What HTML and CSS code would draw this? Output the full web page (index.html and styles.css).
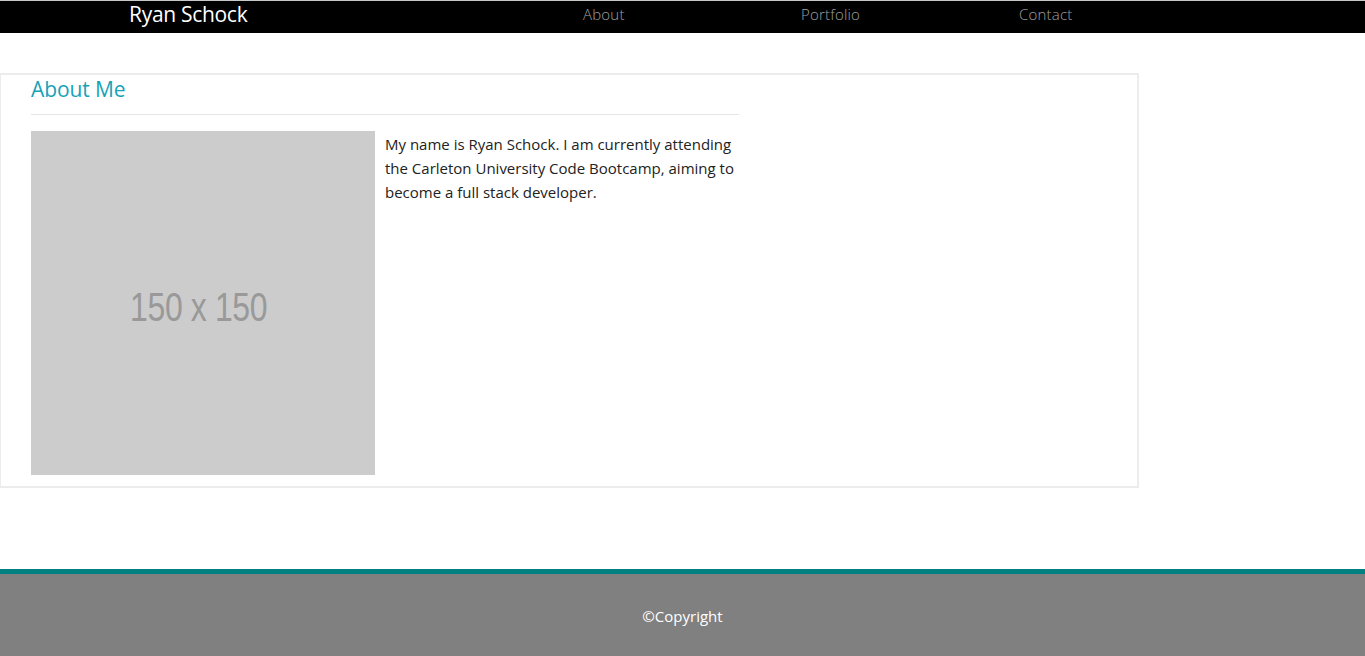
FILE: index.html
```html
<!DOCTYPE html>
<html lang="en">
<head>
<meta charset="utf-8">
<title>Ryan Schock</title>
<link rel="stylesheet" href="styles.css">
</head>
<body>
<header class="topbar">
  <div class="brand">Ryan Schock</div>
  <nav class="nav">
    <a href="#" class="nav-link nav-about">About</a>
    <a href="#" class="nav-link nav-portfolio">Portfolio</a>
    <a href="#" class="nav-link nav-contact">Contact</a>
  </nav>
</header>
<main class="main">
  <section class="about">
    <h1 class="about-title">About Me</h1>
    <hr class="about-rule">
    <div class="about-body">
      <div class="placeholder"><span>150 x 150</span></div>
      <p class="about-text">My name is Ryan Schock. I am currently attending the Carleton University Code Bootcamp, aiming to become a full stack developer.</p>
    </div>
  </section>
</main>
<footer class="footer">
  <span>©Copyright</span>
</footer>
</body>
</html>
```

FILE: styles.css
```css
* { box-sizing: border-box; }
html, body { margin: 0; padding: 0; }
body {
  font-family: "Open Sans", "Noto Sans", sans-serif;
  background: #fff;
  color: #222;
  width: 1365px;
  height: 656px;
  overflow: hidden;
  display: flex;
  flex-direction: column;
}
.topbar {
  border-top: 1px solid #c8c8c8;
  background: #000;
  height: 33px;
  display: flex;
  align-items: center;
  padding-left: 129px;
  padding-bottom: 6px;
}
.brand {
  color: #fff;
  font-size: 21px;
  width: 454px;
  letter-spacing: -0.3px;
}
.nav { display: flex; }
.nav-link {
  color: #a0a0a0;
  text-decoration: none;
  font-size: 15px;
  font-weight: 300;
  letter-spacing: 0.2px;
}
.nav-about { width: 218px; }
.nav-portfolio { width: 218px; }
.main {
  padding-top: 40px;
  flex: 1;
}
.about {
  width: 1139px;
  height: 415px;
  border: 2px solid #ececec;
  border-left-width: 1px;
  padding: 0 0 0 30px;
}
.about-title {
  margin: 0;
  padding-top: 0;
  font-size: 21px;
  font-weight: 400;
  color: #17a2b8;
  line-height: 28px;
  letter-spacing: -0.1px;
}
.about-rule {
  margin: 11px 0 0;
  width: 708px;
  border: 0;
  border-top: 1px solid #e5e5e5;
}
.about-body {
  display: flex;
  margin-top: 16px;
}
.placeholder {
  width: 344px;
  height: 344px;
  background: #cccccc;
  display: flex;
  align-items: center;
  justify-content: center;
  padding-right: 8px;
  padding-top: 8px;
}
.placeholder span {
  font-family: "Liberation Sans", Arial, sans-serif;
  font-size: 40px;
  color: #999;
  transform: scaleX(0.8);
  letter-spacing: -0.5px;
}
.about-text {
  margin: 0 0 0 10px;
  width: 356px;
  font-size: 15px;
  line-height: 24px;
  padding-top: 1px;
  letter-spacing: 0;
}
.footer {
  height: 87px;
  border-top: 5px solid #008080;
  background: #808080;
  color: #fff;
  font-size: 15px;
  display: flex;
  align-items: center;
  justify-content: center;
  padding-top: 2px;
}
```
